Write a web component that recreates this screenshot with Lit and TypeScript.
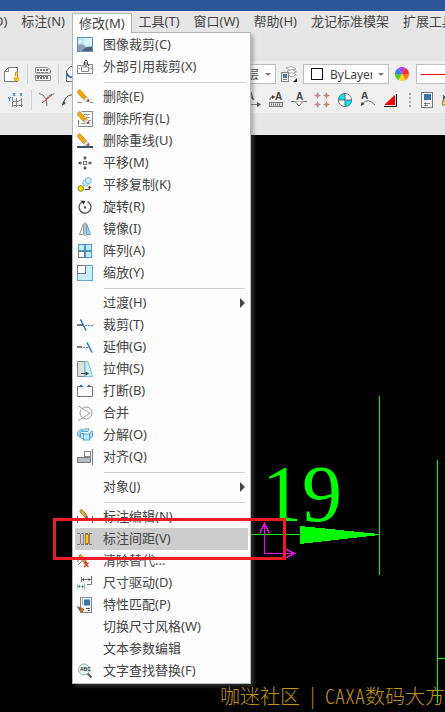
import { LitElement, html, css, svg, nothing } from "lit";
import type { SVGTemplateResult, TemplateResult } from "lit";
import { customElement } from "lit/decorators.js";
import { classMap } from "lit/directives/class-map.js";

/* ---------- icons, drawn on a 16 x 16 grid ---------- */

const pencil = svg`
  <path d="M0.5 2L3 0.5L9.5 8L6.5 10.5L1 4.5Z" fill="#f9a60a" stroke="#b98a3c" stroke-width=".7"/>
  <path d="M7 10.5L9.8 8L11.6 9.8L9 12.5Z" fill="#e3e3e3" stroke="#999" stroke-width=".6"/>
  <path d="M9.4 12.2L11.6 10L12.6 11.4Q12.4 13 10.8 13Z" fill="#9c4a26"/>`;

const smallPencil = svg`
  <path d="M3 1.5L5 0.5L10 6.5L8 8.5L3 3Z" fill="#e3a93a" stroke="#8f6d33" stroke-width=".8"/>
  <path d="M8 8.4L10 6.6L11.5 9.6Z" fill="#8c4b2b"/>`;

const icons: Record<string, SVGTemplateResult> = {
  imageClip: svg`
    <rect x=".5" y=".5" width="15" height="14" fill="#b5e8fb" stroke="#5f93bd"/>
    <path d="M7 1H15V9L7 8Z" fill="#d5f3fd"/>
    <path d="M1 8Q5 6 8 9T15 9V14H1Z" fill="#8ba0b4"/>
    <path d="M5 14Q9 9 15 10V14Z" fill="#4c5f76"/>
    <path d="M3 3V6M1.6 4.5H4.4" stroke="#fff"/>`,
  xrefClip: svg`
    <path d="M6 6.5H.5V14.5H15.5V5.5H12" fill="none" stroke="#888"/>
    <path d="M4.5 8V12.5H11.5V8Z" fill="#fff" stroke="#888"/>
    <path d="M3 9.5H.5M15.5 9.5H12" stroke="#aaa"/>
    <path d="M7.500 6V2.500Q9 -.5 10.500 2.500V6M9 3V8M7 4V7M11.500 5V7" fill="none" stroke="#555"/>`,
  erase: svg`${pencil}<path d="M0 13.5H5M13 13.5H16" stroke="#999"/>`,
  eraseAll: svg`
    <path d="M4.5 .5H15.5V15.5H1.5V9" fill="#fff" stroke="#888"/>
    <path d="M7 3.5H13M9 6.5H13M11 9.5H14M4 12.5H8" stroke="#999"/>${pencil}`,
  eraseDup: svg`${pencil}<path d="M0 14H16" stroke="#33506e" stroke-width="2"/>`,
  move: svg`
    <rect x="6.5" y="6.5" width="3" height="3" fill="#fff" stroke="#777"/>
    <path d="M8 1L10 3.500H6ZM8 15L10 12.500H6ZM1 8L3.500 6V10ZM15 8L12.500 6V10Z" fill="#444"/>
    <path d="M8 3V5M8 11V13M3 8H5M11 8H13" stroke="#555"/>`,
  moveCopy: svg`
    <circle cx="8.7" cy="6" r="3" fill="#c9edfb" stroke="#6fb3de"/>
    <circle cx="11.3" cy="3.6" r="3" fill="#c9edfb" stroke="#6fb3de"/>
    <circle cx="3.8" cy="11.5" r="2.8" fill="#ffe600" stroke="#7f7a2a"/>
    <path d="M8 12.5H12.5V10" fill="none" stroke="#8a2d2d"/><path d="M12.5 8.5L14.3 11H10.7Z" fill="#8a2d2d"/>`,
  rotate: svg`
    <path d="M5 3A6 6 0 1 0 10.500 2.700" fill="none" stroke="#555" stroke-width="1.3"/>
    <path d="M3.500 1.500L8.500 2L6.500 5.500Z" fill="#333"/><rect x="7" y="7.500" width="2" height="2" fill="#444"/>`,
  mirror: svg`
    <path d="M6.5 2.5V13.5H2.5Z" fill="#eee" stroke="#999"/>
    <path d="M9.5 2.5V13.5H13.5Z" fill="#9ad7f7" stroke="#5aa5d6"/>
    <path d="M8 1V15" stroke="#888"/>`,
  array: svg`
    <g fill="#c3e9fb" stroke="#4b97cd"><rect x="1.5" y="1.5" width="6" height="6"/><rect x="8.5" y="1.5" width="6" height="6"/><rect x="8.5" y="8.5" width="6" height="6"/></g>
    <rect x="1.5" y="8.5" width="6" height="6" fill="#fff" stroke="#777"/>`,
  scale: svg`
    <rect x=".5" y=".5" width="15" height="15" fill="#c8effd" stroke="#5aa5d6"/>
    <rect x=".5" y=".5" width="8" height="8" fill="#fff" stroke="#777"/>`,
  trim: svg`
    <path d="M0 8H6" stroke="#777" stroke-width="2"/><path d="M8 8.500H16" stroke="#3d8fd4" stroke-dasharray="2 1"/>
    <path d="M3.5 2.5L9 13.5" stroke="#1e6fc0" stroke-width="1.4"/>`,
  extend: svg`
    <path d="M0 8H5" stroke="#777" stroke-width="2"/><path d="M6 8.500H12" stroke="#3d8fd4" stroke-dasharray="2 1"/>
    <path d="M10 3.5L15 13.5" stroke="#1e6fc0" stroke-width="1.4"/>`,
  stretch: svg`
    <path d="M.5 .5H8V15.5H.5Z" fill="#dedede" stroke="#888"/>
    <path d="M8 .5H11L15.5 15.5H8Z" fill="#c8effd" stroke="#7dbfe5"/>
    <path d="M4 12.5H9" stroke="#444"/><path d="M8.5 10.5L12 12.5L8.5 14.5Z" fill="#333"/>`,
  breakLine: svg`
    <path d="M3 3.5H.5V13.5H15.5V3.5H13" fill="none" stroke="#777"/>
    <path d="M3 2H5V4H3ZM11 2H13V4H11Z" fill="#1e6fc0"/><path d="M5 3.5H6M10 3.5H11" stroke="#1e6fc0"/>`,
  join: svg`
    <circle cx="9" cy="8" r="6" fill="none" stroke="#999"/>
    <path d="M1 .8L13 8.2L1 15.6" fill="none" stroke="#888" stroke-width=".8"/>`,
  explode: svg`
    <g fill="#c3e9fb" stroke="#4b9dd3" stroke-width=".9"><path d="M.5 5L4 2.5L6 3L3 5.5V10L.8 9Z"/><path d="M5 4L8 1.8H12L11 4.5H5.5Z"/><path d="M3.5 6.5H7V12.5L3.5 10.5Z"/><path d="M13.5 5L15.5 4V9.5L13 11.5V6Z"/><rect x="6.5" y="7" width="6" height="6"/></g>`,
  align: svg`
    <rect x="7.5" y="2.5" width="6" height="5" fill="#fff" stroke="#888"/>
    <rect x=".5" y="8.5" width="13" height="5" fill="#b5bcc3" stroke="#737b84"/><path d="M15.5 0V16" stroke="#777"/>`,
  dimEdit: svg`${smallPencil}<path d="M.5 7V14M15.5 7V14M1 10.5H3M13 10.5H15" stroke="#666"/>`,
  dimSpace: svg`
    <path d="M0 2.500H16M0 13.500H16" stroke="#777" stroke-dasharray="3 1"/>
    <path d="M3.500 3V13M12.500 3V13M6.500 3V13" stroke="#888"/>
    <rect x="8.500" y="3.500" width="3" height="9" fill="#ffc61a" stroke="#b98313"/>`,
  clearOverride: svg`
    <g transform="translate(-1 1)">${smallPencil}</g><path d="M1 9V6M1 12L5 8" stroke="#777"/>
    <path d="M7 9.500L11.500 14M11.500 9.500L7 14" stroke="#e8452c" stroke-width="1.600"/>`,
  dimDrive: svg`
    <path d="M4.5 2V7M4.5 4.5H14M14.5 1V9.5H10" fill="none" stroke="#777"/>
    <path d="M5 4.5L7 3V6ZM13.5 4.5L11.5 3V6Z" fill="#444"/>
    <path d="M.5 8.5V14M7.5 8.5V14M1 11.5H7" stroke="#8fc4e8"/><path d="M1 11.5L3 10V13ZM7 11.5L5 10V13Z" fill="#2878b8"/>`,
  matchProps: svg`
    <rect x="3.5" y=".5" width="11" height="15" fill="#f5f5f5" stroke="#888"/>
    <rect x="7" y="2.5" width="6" height="6" fill="#3c72a8"/>
    <path d="M5 3H6M5 5H6M5 7H6M9 11.5H13M11 13.5H13" stroke="#555"/>
    <path d="M.5 9.5L4 10.5L7.5 12L5.5 15.5L2.5 14Z" fill="#b06a32"/><path d="M.5 9.5L3 13" stroke="#6f3e1b"/>`,
  findText: svg`
    <circle cx="7" cy="6.500" r="5.500" fill="#e4f5f5" stroke="#8fb3b5"/>
    <path d="M10.500 10.500L14.500 14.500" stroke="#666" stroke-width="2.200"/>
    <text x="3" y="8" class="tiny">ABC</text>`,

  docLock: svg`
    <path d="M4.5 1.500H13.5V15.5H.5V5.500Z" fill="#fff" stroke="#777"/><path d="M.5 5.500H4.500V1.500" fill="none" stroke="#888"/>
    <path d="M11.500 10V6.500Q12.500 5.500 13.500 6.500V10" fill="#f6d27a" stroke="#c98d10"/><rect x="10" y="11" width="5" height="4" fill="#f6b921"/>`,
  dwgConvert: svg`
    <path d="M.5 1.500H12L15.500 4.500V7H.5ZM.5 9.500V14.500H15.500V9.500Z" fill="#f6f6f6" stroke="#888"/>
    <path d="M2 4H14M2 12H14" stroke="#777" stroke-width="2" stroke-dasharray="2 1"/>
    <path d="M2 6.500H14M2 10.500H14" stroke="#777" stroke-dasharray="3 1"/>`,
  docRefresh: svg`
    <path d="M4.5 .5H14.5V15.5H.5V5Z" fill="#fff" stroke="#666"/><path d="M1 7Q2 12 7 11" fill="none" stroke="#2b78bd" stroke-width="2"/><path d="M6 8L10 11L6 14Z" fill="#2b78bd"/>`,
  coordDim: svg`
    <path d="M4.5 5V15M4 13.500H15M4.5 9.500H10L14 7M8.5 6V15M13.5 6V15" fill="none" stroke="#888"/>
    <path d="M0 5L1.5 7L3 5M1.5 7V9M5 1L7 4M7 1L5 4M12 1L14 4M14 1L12 4" fill="none" stroke="#2b8bd0"/>`,
  chamfer: svg`
    <path d="M0 1.5L4 3L7 7L8 14M7 7L10 3.5L15.5 1.5" fill="none" stroke="#777"/>
    <path d="M3 11L13 3" stroke="#e02020"/>`,
  curve: svg`<path d="M1 12Q4 3 9 3T15 8" fill="none" stroke="#555"/><path d="M0 14L1 9L4 11Z" fill="#444"/>`,
  layers: svg`
    <g fill="#fff" stroke="#999" stroke-width=".8"><path d="M5 2L10 .5L15 3L9 4.5Z"/><path d="M6 5L11 3.5L15.5 6L10 8Z"/><path d="M7 8L11 6.5L15.5 9L10 11Z"/></g>
    <rect x=".5" y="6.5" width="7" height="9" fill="#f3f3f3" stroke="#888"/><rect x="2" y="8" width="4" height="4" fill="#4179b0"/><path d="M2 13.5H6" stroke="#777"/>
    <path d="M16 12V16H12Z" fill="#333"/>`,
  letterArrow: svg`
    <text x="2" y="8" class="letter">A</text><path d="M0 12.5H14" stroke="#777"/><path d="M12 10L16 12.5L12 15Z" fill="#555"/>`,
  textBlock: svg`
    <text x="7" y="8" class="letter">A</text><path d="M2 8Q2 4 6 5" fill="none" stroke="#444"/><path d="M4 3L7.5 5L4 7Z" fill="#444"/>
    <rect x="1.5" y="10.5" width="13" height="4" fill="#ddd" stroke="#777"/><path d="M3 12.5H13" stroke="#666" stroke-width="2" stroke-dasharray="1 1"/>`,
  datum: svg`
    <text x="5" y="8" class="letter">A</text><path d="M0 9.5H16" stroke="#777"/><path d="M4 9.5L8 14L12 9.5" fill="#fff" stroke="#777"/>`,
  pointGrid: svg`
    <g fill="none" stroke="#d07a78" stroke-width=".9"><circle cx="3.500" cy="3.500" r="1.6"/><circle cx="12.500" cy="3.500" r="1.6"/><circle cx="3.500" cy="12.500" r="1.6"/><circle cx="12.500" cy="12.500" r="1.6"/>
    <path d="M3.500 .5V6.500M.5 3.500H6.500M12.500 .5V6.500M9.500 3.500H15.500M3.500 9.500V15.500M.5 12.500H6.500M12.500 9.500V15.500M9.500 12.500H15.500"/></g>`,
  centroid: svg`
    <circle cx="8" cy="8" r="7" fill="#fff"/><path d="M8 8V1A7 7 0 0 0 1 8ZM8 8V15A7 7 0 0 0 15 8Z" fill="#00e5ee"/>
    <circle cx="8" cy="8" r="6.6" fill="none" stroke="#777"/><path d="M8 1V15M1 8H15" stroke="#667"/>`,
  arcLabel: svg`
    <text x="1" y="7" class="letter">A</text><path d="M2 12Q8 5 15 13" fill="none" stroke="#777"/><path d="M1 14L1.500 10L4.500 12Z" fill="#333"/>`,
  slope: svg`<path d="M2 13V12L12 3V13Z" fill="#f00"/><path d="M13.5 2V14.5H1" fill="none" stroke="#111"/>`,
  sheet: svg`
    <rect x="2.500" y=".5" width="11" height="15" fill="#f5f5f5" stroke="#777"/><rect x="5" y="2" width="7" height="6" fill="#3c72a8"/>
    <path d="M5 11.500H11M5 13.500H9" stroke="#888"/><path d="M5 11.500L7 10V13Z" fill="#666"/>`,
  ruler: svg`<path d="M1.500 3V8M1 5.500H14M3 4L1 5.500L3 7" fill="none" stroke="#555"/><rect x=".5" y="9" width="14" height="4" fill="#ffd774" stroke="#a57c23"/>`,
  colorWheel: svg`
    ${["#b13cf0", "#ff2b2b", "#ff7b1c", "#ffd91c", "#55cc33", "#3a7cff"].map((fill, i) => {
      const point = (n: number) => `${8 + 7 * Math.sin((n * Math.PI) / 3 - 0.52)} ${8 - 7 * Math.cos((n * Math.PI) / 3 - 0.52)}`;
      return svg`<path d="M8 8L${point(i)}A7 7 0 0 1 ${point(i + 1)}Z" fill=${fill}/>`;
    })}`,
};

const icon = (name?: string): TemplateResult => html`
  <svg class="icon" width="16" height="16" viewBox="0 0 16 16" aria-hidden="true">${name ? icons[name] : nothing}</svg>`;

/* ---------- data ---------- */

interface Entry {
  label: string;
  icon?: string;
  submenu?: boolean;
  active?: boolean;
}

const groups: Entry[][] = [
  [
    { label: "图像裁剪(C)", icon: "imageClip" },
    { label: "外部引用裁剪(X)", icon: "xrefClip" },
  ],
  [
    { label: "删除(E)", icon: "erase" },
    { label: "删除所有(L)", icon: "eraseAll" },
    { label: "删除重线(U)", icon: "eraseDup" },
    { label: "平移(M)", icon: "move" },
    { label: "平移复制(K)", icon: "moveCopy" },
    { label: "旋转(R)", icon: "rotate" },
    { label: "镜像(I)", icon: "mirror" },
    { label: "阵列(A)", icon: "array" },
    { label: "缩放(Y)", icon: "scale" },
  ],
  [
    { label: "过渡(H)", submenu: true },
    { label: "裁剪(T)", icon: "trim" },
    { label: "延伸(G)", icon: "extend" },
    { label: "拉伸(S)", icon: "stretch" },
    { label: "打断(B)", icon: "breakLine" },
    { label: "合并", icon: "join" },
    { label: "分解(O)", icon: "explode" },
    { label: "对齐(Q)", icon: "align" },
  ],
  [{ label: "对象(J)", submenu: true }],
  [
    { label: "标注编辑(N)", icon: "dimEdit" },
    { label: "标注间距(V)", icon: "dimSpace", active: true },
    { label: "清除替代...", icon: "clearOverride" },
    { label: "尺寸驱动(D)", icon: "dimDrive" },
    { label: "特性匹配(P)", icon: "matchProps" },
    { label: "切换尺寸风格(W)" },
    { label: "文本参数编辑" },
    { label: "文字查找替换(F)", icon: "findText" },
  ],
];

const menus = ["绘图(D)", "标注(N)", "修改(M)", "工具(T)", "窗口(W)", "帮助(H)", "龙记标准模架", "扩展工具"];
const openMenu = "修改(M)";

/* ---------- drop-down menu ---------- */

@customElement("drop-menu")
export class DropMenu extends LitElement {
  static styles = css`
    :host {
      display: block;
      box-sizing: border-box;
      padding: 1px 0;
      border: 1px solid #b4b7b9;
      background: #fdfdfd;
      box-shadow: 3px 3px 3px rgba(100, 100, 100, 0.4);
    }
    .item {
      position: relative;
      display: flex;
      align-items: center;
      gap: 10px;
      box-sizing: border-box;
      width: calc(100% - 4px);
      height: 22px;
      margin: 0 2px;
      padding: 0 3px 0 2px;
      border: 0;
      background: none;
      color: #444;
      font: inherit;
      text-align: left;
      white-space: nowrap;
    }
    .item.active { background: #cdcdcd; }
    .item:focus-visible { outline: 1px solid #2b579a; }
    .icon { flex: none; }
    .label { flex: 1; padding-bottom: 2px; }
    .tiny { font: bold 5px "Liberation Sans", sans-serif; fill: #333; }
    .arrow {
      border: 5px solid transparent;
      border-left-color: #444;
      border-right: 0;
    }
    .line {
      height: 1px;
      margin: 4px 5px 3px 31px;
      border: 0;
      background: #d0d0d0;
    }
    .callout {
      position: absolute;
      z-index: 2;
      inset: -10px -38px;
      left: -22px;
      border: 3px solid #ed1c24;
      pointer-events: none;
    }
  `;

  render() {
    return groups.map(
      (group, i) => html`
        ${i ? html`<hr class="line" />` : nothing}
        ${group.map(
          (entry) => html`
            <button class=${classMap({ item: true, active: !!entry.active })} type="button" role="menuitem">
              ${icon(entry.icon)}
              <span class="label">${entry.label}</span>
              ${entry.submenu ? html`<span class="arrow"></span>` : nothing}
              ${entry.active ? html`<span class="callout"></span>` : nothing}
            </button>
          `
        )}
      `
    );
  }
}

/* ---------- toolbars ---------- */

@customElement("tool-bars")
export class ToolBars extends LitElement {
  static styles = css`
    :host {
      display: block;
      overflow: hidden;
      background: #efefef;
    }
    .row {
      display: flex;
      align-items: center;
      height: 26px;
    }
    .group {
      display: flex;
      flex: none;
      align-items: center;
      gap: 7px;
      box-sizing: border-box;
      width: 92px;
      padding-left: 4px;
    }
    .second .group {
      width: 245px;
      padding-left: 8px;
    }
    .tool {
      flex: none;
      width: 16px;
      height: 16px;
      padding: 0;
      border: 0;
      background: none;
    }
    .icon { display: block; }
    .letter { font: bold 10px "Liberation Sans", sans-serif; fill: #444; }
    .bar {
      flex: none;
      width: 1px;
      height: 20px;
      background: #cfcfcf;
    }
    .field {
      position: relative;
      display: flex;
      flex: none;
      align-items: center;
      margin-right: 5px;
    }
    .combo {
      appearance: none;
      box-sizing: border-box;
      height: 20px;
      padding: 0 16px 0 26px;
      border: 1px solid #bcbcbc;
      border-radius: 0;
      background: #fff;
      color: #444;
      font: inherit;
      font-size: 12px;
    }
    .layer { width: 184px; text-align-last: right; }
    .color { width: 86px; }
    .linetype { width: 90px; }
    .caret {
      position: absolute;
      right: 5px;
      border: 3px solid transparent;
      border-top-color: #777;
      border-bottom: 0;
    }
    .swatch {
      position: absolute;
      left: 8px;
      box-sizing: border-box;
      width: 12px;
      height: 12px;
      border: 1px solid #111;
      background: #fff;
    }
    .stroke {
      position: absolute;
      left: 5px;
      width: 60px;
      height: 1px;
      background: #f00;
    }
    .tools {
      display: flex;
      flex: none;
      align-items: center;
      gap: 7px;
    }
    .grip {
      width: 2px;
      height: 14px;
      margin: 0 1px 0 3px;
      background: repeating-linear-gradient(#aaa 0 2px, transparent 2px 4px);
    }
    .spaced { margin-right: 6px; }
  `;

  private tool(name: string, label: string, spaced = false) {
    return html`<button class=${classMap({ tool: true, spaced })} type="button" aria-label=${label}>${icon(name)}</button>`;
  }

  render() {
    return html`
      <div class="row">
        <div class="group">
          ${this.tool("docLock", "锁定")}<span class="bar"></span>${this.tool("dwgConvert", "转换")}<span class="bar"></span>${this.tool("docRefresh", "刷新")}
        </div>
        <label class="field">
          <select class="combo layer" aria-label="图层"><option>粗实线层</option></select>
          <span class="caret"></span>
        </label>
        ${this.tool("layers", "图层设置", true)}
        <label class="field">
          <select class="combo color" aria-label="颜色"><option>ByLayer</option></select>
          <span class="swatch"></span><span class="caret"></span>
        </label>
        ${this.tool("colorWheel", "选择颜色", true)}
        <label class="field">
          <select class="combo linetype" aria-label="线型"><option></option></select>
          <span class="stroke"></span>
        </label>
      </div>
      <div class="row second">
        <div class="group">
          ${this.tool("coordDim", "坐标标注")}<span class="bar"></span>${this.tool("chamfer", "倒角标注")}${this.tool("curve", "引出说明")}
        </div>
        <div class="tools">
          ${this.tool("letterArrow", "文字")}${this.tool("textBlock", "形位公差")}${this.tool("datum", "基准")}${this.tool("pointGrid", "孔标注")}
          ${this.tool("centroid", "重心")}${this.tool("arcLabel", "弧长")}${this.tool("slope", "斜度")}
          <span class="grip"></span>
          ${this.tool("sheet", "特性")}${this.tool("ruler", "测量")}
        </div>
      </div>
    `;
  }
}

/* ---------- page ---------- */

@customElement("app-root")
export class AppRoot extends LitElement {
  static styles = css`
    :host {
      display: flex;
      flex-direction: column;
      min-height: 100vh;
      overflow: hidden;
      background: #e6e6e6;
      color: #444;
      font: 13px/20px "Noto Sans", "Noto Sans CJK SC", sans-serif;
    }
    .title { height: 11px; background: #2b579a; }
    .menubar {
      display: flex;
      height: 22px;
      margin-left: -43px;
      padding-bottom: 28px;
    }
    .entry { position: relative; flex: none; }
    .tab {
      box-sizing: border-box;
      height: 22px;
      padding: 0 7px 2px;
      border: 0;
      background: none;
      color: inherit;
      font: inherit;
      white-space: nowrap;
    }
    .open .tab {
      position: relative;
      z-index: 2;
      height: 20px;
      margin-top: 2px;
      background: #fdfdfd;
      box-shadow: inset 1px 1px #b4b7b9, inset -1px 0 #b4b7b9;
    }
    .menu {
      position: absolute;
      z-index: 1;
      top: 21px;
      left: 0;
      width: 179px;
    }
    .canvas {
      position: relative;
      display: flex;
      flex: 1;
      flex-direction: column;
      align-items: flex-end;
      justify-content: flex-end;
      margin-top: 22px;
      overflow: hidden;
      background: #000;
    }
    .drawing { position: absolute; top: 0; left: 0; }
    .number { font: 80px "Liberation Serif", serif; fill: #0f0; }
    .mark {
      display: flex;
      gap: 10px;
      color: #c4940a;
      font-family: "Noto Sans CJK SC", sans-serif;
      font-size: 20px;
      font-weight: 300;
      line-height: 32px;
      white-space: nowrap;
    }
    .latin { font-feature-settings: "hwid"; }
  `;

  render() {
    return html`
      <div class="title"></div>
      <nav class="menubar">
        ${menus.map(
          (name) => html`
            <div class=${classMap({ entry: true, open: name === openMenu })}>
              <button class="tab" type="button">${name}</button>
              ${name === openMenu ? html`<drop-menu class="menu" role="menu"></drop-menu>` : nothing}
            </div>
          `
        )}
      </nav>
      <tool-bars></tool-bars>
      <main class="canvas">
        <svg class="drawing" width="445" height="577" viewBox="0 0 445 577" shape-rendering="crispEdges">
          <g fill="none" stroke="#0f0">
            <path d="M250 399.5H379M379.5 261V440M437.5 325V568M437 523.5H445" />
          </g>
          <path d="M300 391V409L379 400V399Z" fill="#0f0" />
          <text class="number" x="262" y="386">19</text>
          <path d="M259.500 398.500L264.500 388.500L269.500 398.500M264.500 388V418.500H294M284.500 413.500L294.500 418.500L284.500 423.500" fill="none" stroke="#f0f" />
        </svg>
        <div class="mark"><span>咖迷社区</span><span>|</span><span><span class="latin">CAXA</span>数码大方</span></div>
      </main>
    `;
  }
}
